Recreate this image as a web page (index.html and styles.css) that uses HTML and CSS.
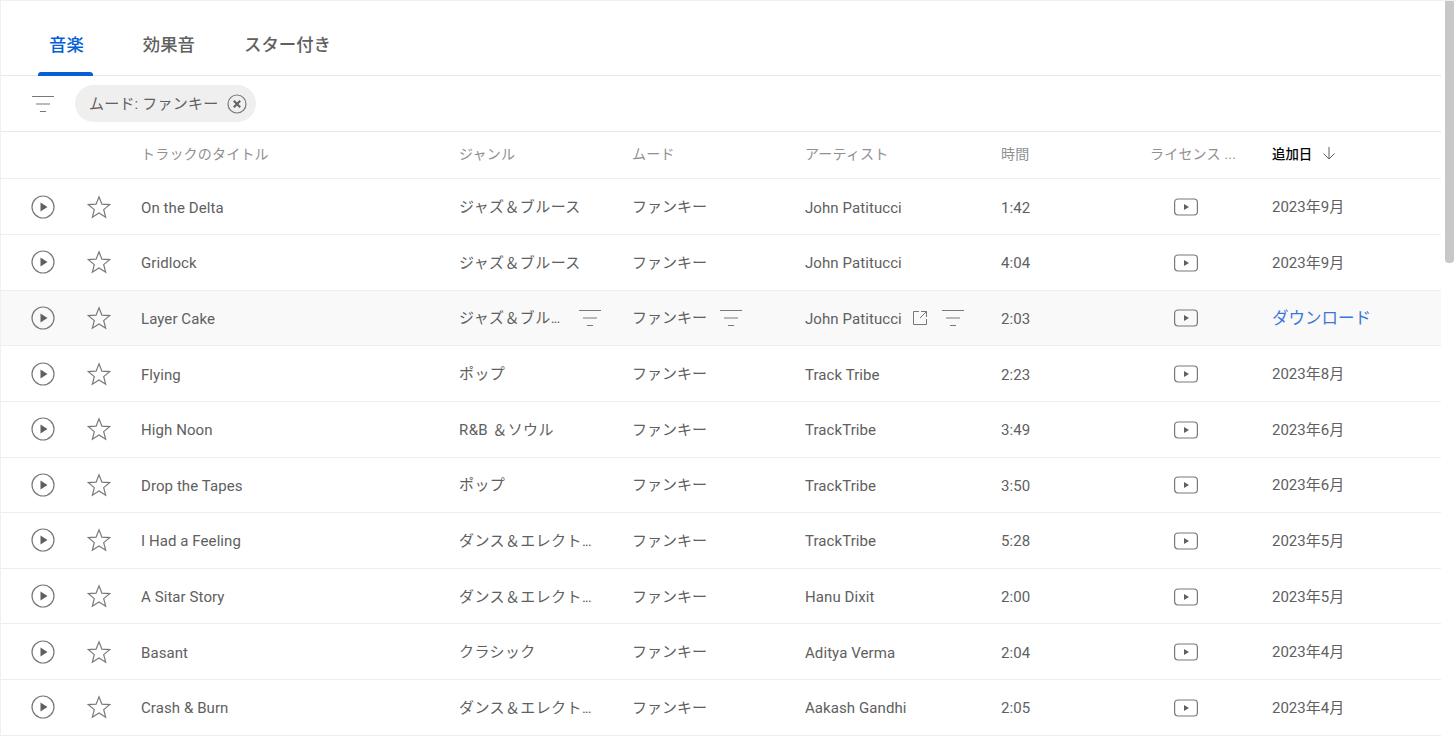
FILE: index.html
```html
<!DOCTYPE html>
<html lang="ja">
<head>
    <meta charset="UTF-8">
    <title>オーディオ ライブラリ</title>
    <link rel="stylesheet" href="styles.css">
</head>
<body>
    <svg class="defs" width="0" height="0">
        <symbol id="i-filter" viewBox="0 0 24 24"><path d="M1 4.500h22M5 12h14M9 19.500h6" fill="none" stroke="currentColor" stroke-width="1.200"/></symbol>
        <symbol id="i-play" viewBox="0 0 24 24"><circle cx="12" cy="12" r="11" fill="none" stroke="currentColor" stroke-width="1.200"/><path d="M9.500 7.500v9l7-4.500z" fill="#606060"/></symbol>
        <symbol id="i-star" viewBox="0 0 24 24"><path d="M12 1.800l2.900 7.300 7.800.5-6 5 1.950 7.600L12 18l-6.650 4.200L7.300 14.600l-6-5 7.800-.5z" fill="none" stroke="currentColor" stroke-width="1.200"/></symbol>
        <symbol id="i-video" viewBox="0 0 24 24"><rect x=".6" y="4" width="22.800" height="16" rx="3.500" fill="none" stroke="currentColor" stroke-width="1.200"/><path d="M10 9v6l5-3z" fill="#606060"/></symbol>
        <symbol id="i-open" viewBox="0 0 14 14"><path d="M6 .5H.5v13h13V8M8 .5h5.500V6M13.500.5L7 7" fill="none" stroke="currentColor" stroke-width="1"/></symbol>
    </svg>

    <div class="page">
        <main class="library">
            <nav class="tabs">
                <a class="tab active">音楽</a>
                <a class="tab">効果音</a>
                <a class="tab">スター付き</a>
            </nav>

            <div class="filter-bar">
                <svg class="filter-icon"><use href="#i-filter"/></svg>
                <div class="chip">
                    <span class="chip-label">ムード: ファンキー</span>
                    <svg class="chip-close" viewBox="0 0 20 20">
                        <circle cx="10" cy="10" r="9" fill="none" stroke="currentColor" stroke-width="1.200"/>
                        <path d="M6.800 6.800l6.400 6.400M13.200 6.800l-6.400 6.400" fill="none" stroke="#606060" stroke-width="2"/>
                    </svg>
                </div>
            </div>

            <div class="row head">
                <span></span>
                <span></span>
                <span>トラックのタイトル</span>
                <span>ジャンル</span>
                <span>ムード</span>
                <span>アーティスト</span>
                <span>時間</span>
                <span>ライセンス ...</span>
                <span class="sorted">追加日
                    <svg viewBox="0 0 14 14"><path d="M7 1v12M1.500 7.500L7 13l5.500-5.500" fill="none" stroke="currentColor" stroke-width="1"/></svg>
                </span>
            </div>

            <div class="row">
                <svg class="icon"><use href="#i-play"/></svg>
                <svg class="icon"><use href="#i-star"/></svg>
                <span class="latin">On the Delta</span>
                <span class="genre">ジャズ＆ブルース</span>
                <span>ファンキー</span>
                <span class="latin">John Patitucci</span>
                <span class="latin">1:42</span>
                <svg class="video"><use href="#i-video"/></svg>
                <span>2023年9月</span>
            </div>
            <div class="row">
                <svg class="icon"><use href="#i-play"/></svg>
                <svg class="icon"><use href="#i-star"/></svg>
                <span class="latin">Gridlock</span>
                <span class="genre">ジャズ＆ブルース</span>
                <span>ファンキー</span>
                <span class="latin">John Patitucci</span>
                <span class="latin">4:04</span>
                <svg class="video"><use href="#i-video"/></svg>
                <span>2023年9月</span>
            </div>
            <div class="row hover">
                <svg class="icon"><use href="#i-play"/></svg>
                <svg class="icon"><use href="#i-star"/></svg>
                <span class="latin">Layer Cake</span>
                <div class="cell-tools genre-tools">
                    <span class="genre">ジャズ＆ブル<span class="dots">...</span></span>
                    <svg class="tool"><use href="#i-filter"/></svg>
                </div>
                <div class="cell-tools mood-tools">
                    <span>ファンキー</span>
                    <svg class="tool"><use href="#i-filter"/></svg>
                </div>
                <div class="cell-tools artist-tools">
                    <span class="latin">John Patitucci</span>
                    <svg class="open"><use href="#i-open"/></svg>
                    <svg class="tool"><use href="#i-filter"/></svg>
                </div>
                <span class="latin">2:03</span>
                <svg class="video"><use href="#i-video"/></svg>
                <a class="download">ダウンロード</a>
            </div>
            <div class="row">
                <svg class="icon"><use href="#i-play"/></svg>
                <svg class="icon"><use href="#i-star"/></svg>
                <span class="latin">Flying</span>
                <span class="genre">ポップ</span>
                <span>ファンキー</span>
                <span class="latin">Track Tribe</span>
                <span class="latin">2:23</span>
                <svg class="video"><use href="#i-video"/></svg>
                <span>2023年8月</span>
            </div>
            <div class="row">
                <svg class="icon"><use href="#i-play"/></svg>
                <svg class="icon"><use href="#i-star"/></svg>
                <span class="latin">High Noon</span>
                <span class="genre">R&amp;B ＆ソウル</span>
                <span>ファンキー</span>
                <span class="latin">TrackTribe</span>
                <span class="latin">3:49</span>
                <svg class="video"><use href="#i-video"/></svg>
                <span>2023年6月</span>
            </div>
            <div class="row">
                <svg class="icon"><use href="#i-play"/></svg>
                <svg class="icon"><use href="#i-star"/></svg>
                <span class="latin">Drop the Tapes</span>
                <span class="genre">ポップ</span>
                <span>ファンキー</span>
                <span class="latin">TrackTribe</span>
                <span class="latin">3:50</span>
                <svg class="video"><use href="#i-video"/></svg>
                <span>2023年6月</span>
            </div>
            <div class="row">
                <svg class="icon"><use href="#i-play"/></svg>
                <svg class="icon"><use href="#i-star"/></svg>
                <span class="latin">I Had a Feeling</span>
                <span class="genre">ダンス＆エレクト<span class="dots">...</span></span>
                <span>ファンキー</span>
                <span class="latin">TrackTribe</span>
                <span class="latin">5:28</span>
                <svg class="video"><use href="#i-video"/></svg>
                <span>2023年5月</span>
            </div>
            <div class="row">
                <svg class="icon"><use href="#i-play"/></svg>
                <svg class="icon"><use href="#i-star"/></svg>
                <span class="latin">A Sitar Story</span>
                <span class="genre">ダンス＆エレクト<span class="dots">...</span></span>
                <span>ファンキー</span>
                <span class="latin">Hanu Dixit</span>
                <span class="latin">2:00</span>
                <svg class="video"><use href="#i-video"/></svg>
                <span>2023年5月</span>
            </div>
            <div class="row">
                <svg class="icon"><use href="#i-play"/></svg>
                <svg class="icon"><use href="#i-star"/></svg>
                <span class="latin">Basant</span>
                <span class="genre">クラシック</span>
                <span>ファンキー</span>
                <span class="latin">Aditya Verma</span>
                <span class="latin">2:04</span>
                <svg class="video"><use href="#i-video"/></svg>
                <span>2023年4月</span>
            </div>
            <div class="row">
                <svg class="icon"><use href="#i-play"/></svg>
                <svg class="icon"><use href="#i-star"/></svg>
                <span class="latin">Crash &amp; Burn</span>
                <span class="genre">ダンス＆エレクト<span class="dots">...</span></span>
                <span>ファンキー</span>
                <span class="latin">Aakash Gandhi</span>
                <span class="latin">2:05</span>
                <svg class="video"><use href="#i-video"/></svg>
                <span>2023年4月</span>
            </div>
        </main>
        <div class="scrollbar"><div class="thumb"></div></div>
    </div>
</body>
</html>
```

FILE: styles.css
```css
html, body {
    margin: 0;
    height: 100%;
    overflow: hidden;
    background: #fff;
}
body {
    font-family: Roboto, "Noto Sans CJK JP", sans-serif;
    font-size: 15px;
    color: #606060;
}
svg { color: #787878; }
.defs { position: absolute; }
.page {
    display: flex;
    height: 736px;
    border-top: 1px solid #f0f0f0;
    box-sizing: border-box;
}
.library {
    width: 1441px;
    flex: none;
    border-left: 1px solid #f0f0f0;
    box-sizing: border-box;
}
.scrollbar {
    flex: 1;
    padding-left: 4px;
}
.thumb {
    width: 9px;
    height: 262px;
    background: #c8c8c8;
    border-radius: 0 0 4px 4px;
}

/* tabs */
.tabs {
    display: flex;
    height: 74px;
    padding-left: 37px;
    border-bottom: 1px solid #e8e8e8;
}
.tab {
    position: relative;
    display: flex;
    align-items: center;
    margin-right: 29px;
    padding: 10px 9px 0 11px;
    font-size: 17.4px;
    font-weight: 500;
}
.tab.active {
    color: #065fd4;
    margin-right: 39px;
}
.tab.active::after {
    content: "";
    position: absolute;
    left: 0;
    right: 0;
    bottom: -1px;
    height: 4px;
    background: #065fd4;
    border-radius: 3px 3px 0 0;
}

/* filter chips */
.filter-bar {
    display: flex;
    align-items: center;
    height: 55px;
    padding-left: 30px;
    border-bottom: 1px solid #e8e8e8;
}
.filter-icon {
    width: 24px;
    height: 24px;
    margin-right: 20px;
}
.chip {
    display: flex;
    align-items: center;
    height: 37px;
    padding: 0 9px 0 14px;
    border-radius: 19px;
    background: #efefef;
    letter-spacing: .2px;
}
.chip-label { padding-bottom: 2px; }
.chip-close {
    width: 20px;
    height: 20px;
    margin-left: 9px;
}

/* table rows */
.row {
    display: grid;
    grid-template-columns: 56px 54px 318px 173px 173px 196px 149px 122px 1fr;
    align-items: center;
    height: 55.65px;
    padding-left: 30px;
    border-bottom: 1px solid #eeeeee;
    box-sizing: border-box;
}
.row.head {
    height: 47.3px;
    font-size: 14px;
    color: #909090;
    letter-spacing: .2px;
}
.row.head > span { padding-bottom: 4px; }
.row.hover { background: #f9f9f9; }
.row > span, .cell-tools > span {
    padding-bottom: 2px;
    white-space: nowrap;
}
.row > .latin, .cell-tools > .latin {
    padding: 2px 0 0;
    letter-spacing: .08px;
}
.genre { letter-spacing: .4px; }
.dots { letter-spacing: -1px; }
.icon {
    width: 24px;
    height: 24px;
}
.row.head > .sorted {
    display: flex;
    align-items: center;
    gap: 10px;
    font-size: 13.4px;
    color: #030303;
    font-weight: 500;
    letter-spacing: 0;
}
.sorted svg {
    width: 14px;
    height: 14px;
    color: #606060;
}
.video {
    width: 24px;
    height: 24px;
    margin: 1px 0 0 24px;
}
.download {
    padding: 1px 0 2px;
    color: #3a76dc;
    font-size: 16.5px;
}

/* hover row tools */
.cell-tools {
    display: flex;
    align-items: center;
    white-space: nowrap;
}
.tool {
    width: 24px;
    height: 24px;
    margin-left: 18px;
}
.mood-tools .tool { margin-left: 12px; }
.open {
    width: 14px;
    height: 14px;
    margin-left: 11px;
}
.artist-tools .tool { margin-left: 14px; }
```
